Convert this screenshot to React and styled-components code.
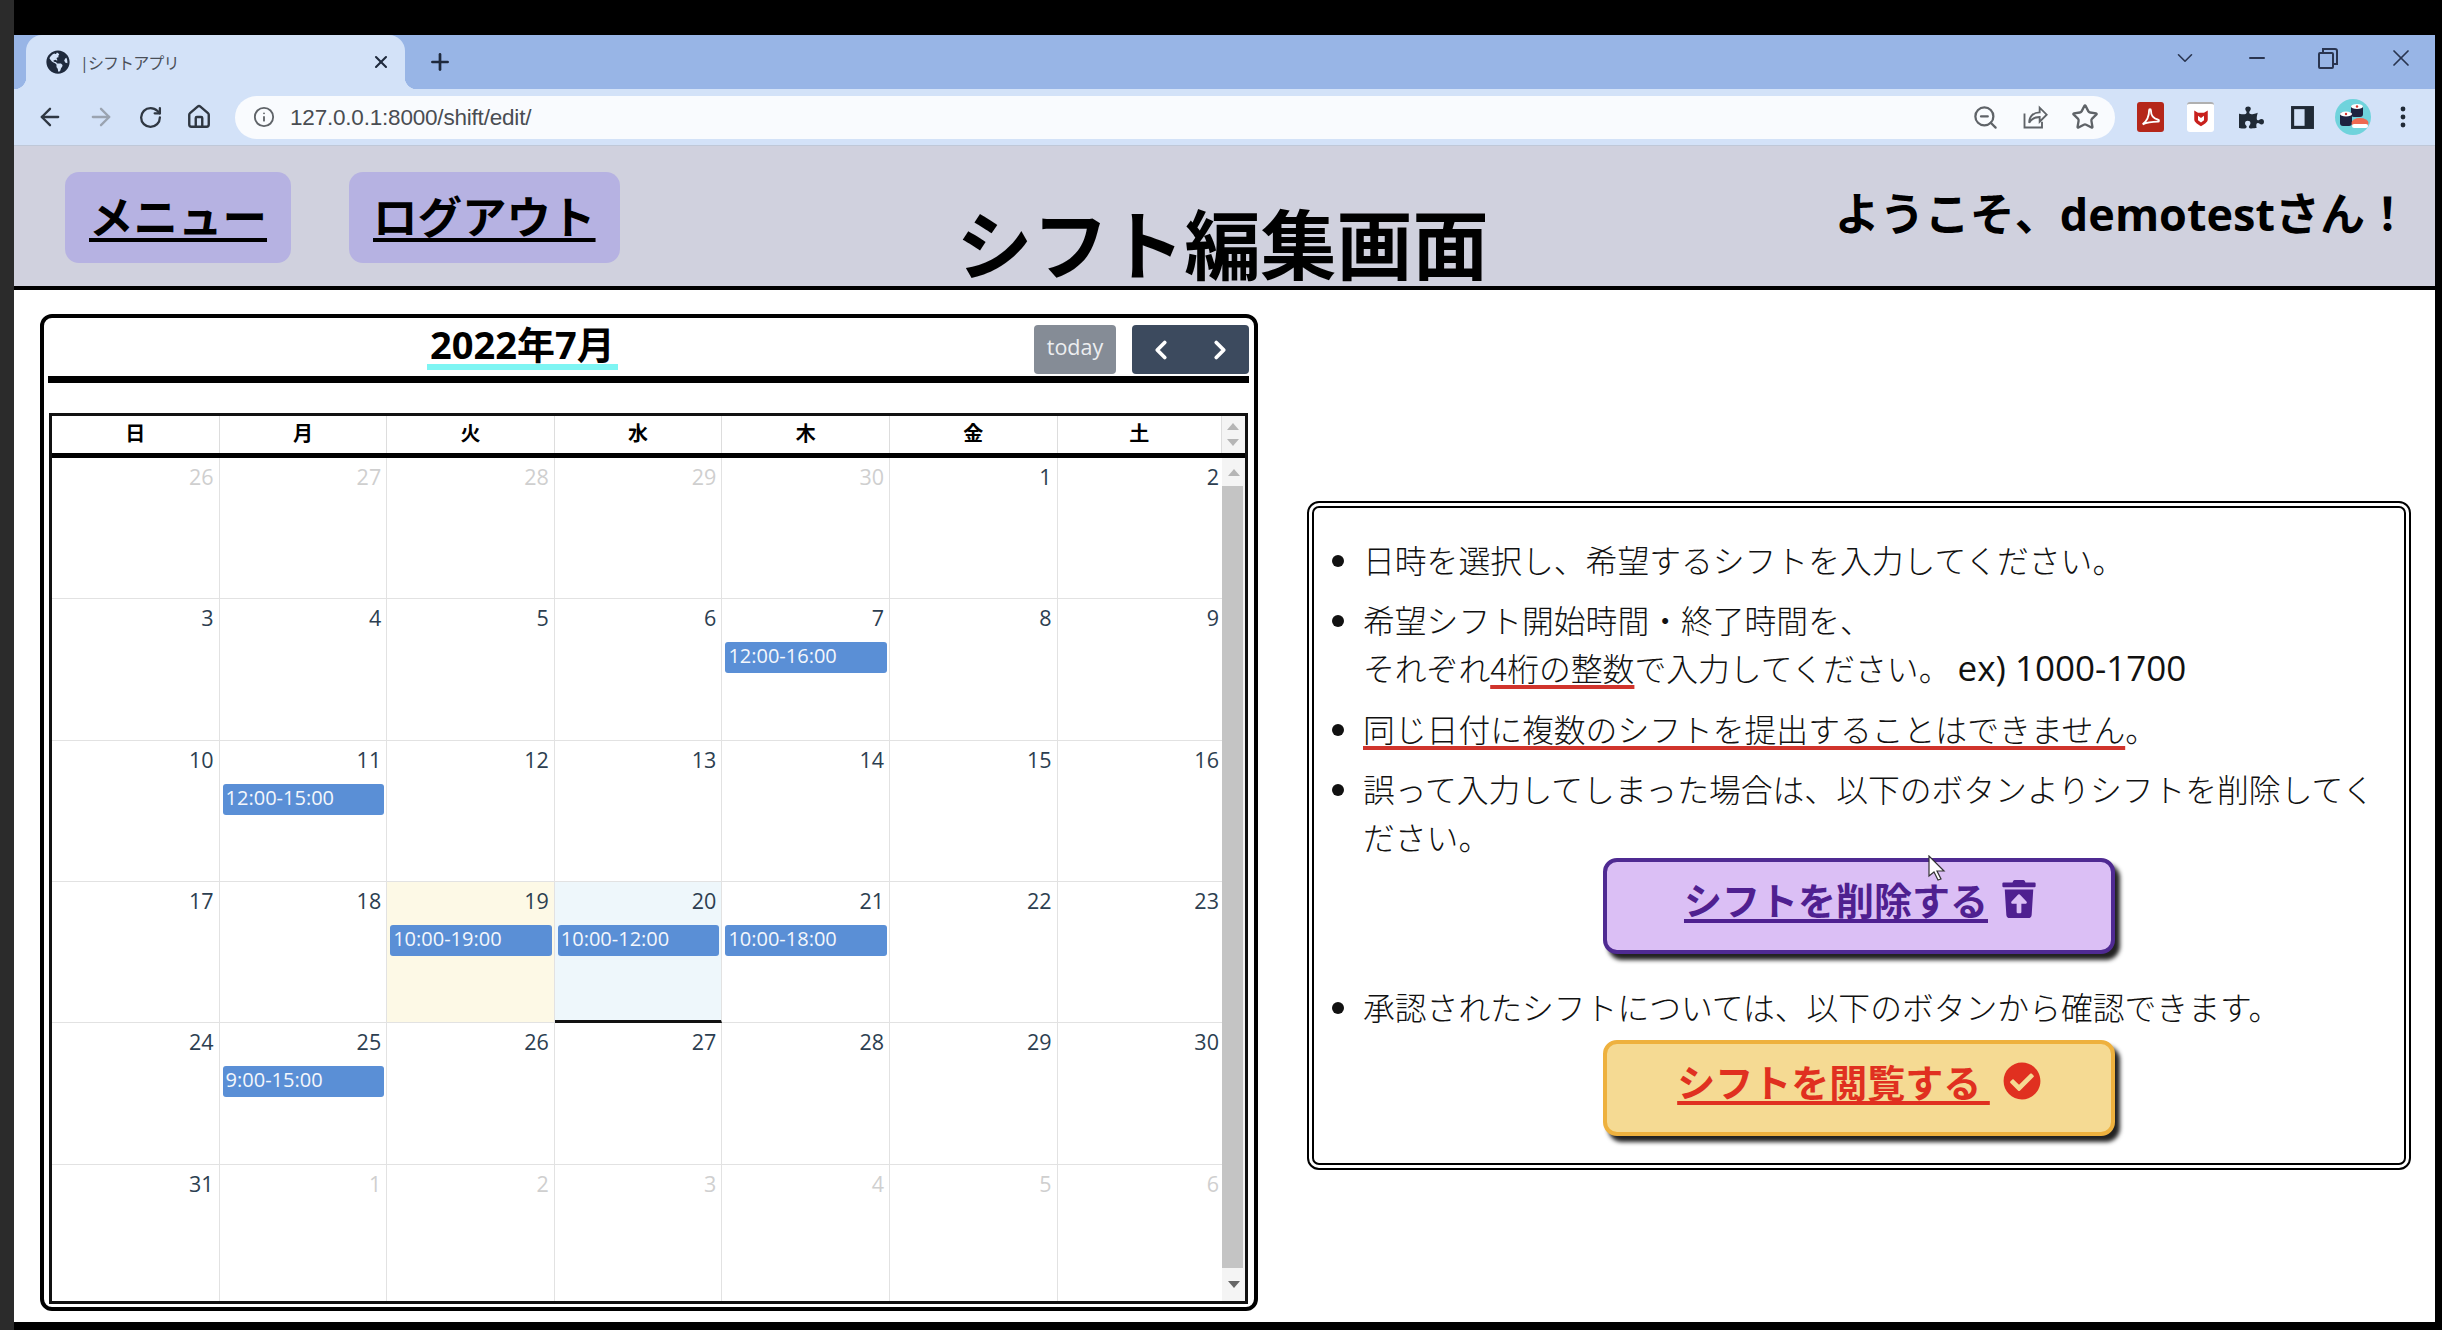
import React from 'react';
import styled, { createGlobalStyle } from 'styled-components';
import {
  ArrowLeft,
  ArrowRight,
  ChevronDown,
  ChevronLeft,
  ChevronRight,
  Home,
  Info,
  Minus,
  Plus,
  RotateCw,
  Star,
  X,
  ZoomOut,
} from 'lucide-react';
import {
  FaCheckCircle,
  FaGlobeAmericas,
  FaPuzzlePiece,
  FaTrashRestore,
} from 'react-icons/fa';

const GlobalStyle = createGlobalStyle`
  html, body {
    margin: 0;
    padding: 0;
    background: #000;
  }
  * {
    box-sizing: border-box;
  }
`;

const SANS = `"Open Sans", "Noto Sans CJK JP", sans-serif`;

const Screen = styled.div`
  position: relative;
  width: 2442px;
  height: 1330px;
  padding: 35px 7px 8px 0;
  background: #000;
  border-left: 14px solid #2b2b2b;
  overflow: hidden;
  font-family: ${SANS};
`;

const Window = styled.div`
  display: flex;
  flex-direction: column;
  height: 100%;
  background: #fff;
`;

const TabStrip = styled.div`
  display: flex;
  align-items: stretch;
  height: 54px;
  padding: 0 20px 0 12px;
  background: #98b5e6;
  color: #1f2a3d;
`;

const Tab = styled.div`
  position: relative;
  display: flex;
  align-items: center;
  width: 379px;
  padding: 0 14px 0 20px;
  background: #d3e2f8;
  border-radius: 16px 16px 0 0;

  &::before,
  &::after {
    content: '';
    position: absolute;
    bottom: 0;
    width: 12px;
    height: 12px;
  }
  &::before {
    left: -12px;
    background: radial-gradient(circle at 0 0, transparent 12px, #d3e2f8 12.5px);
  }
  &::after {
    right: -12px;
    background: radial-gradient(circle at 100% 0, transparent 12px, #d3e2f8 12.5px);
  }
`;

const TabTitle = styled.span`
  flex: 1;
  margin-left: 10px;
  font-size: 16px;
  letter-spacing: -0.9px;
  color: #4a4f58;
`;

const NewTab = styled.div`
  display: flex;
  align-items: center;
  margin-left: 22px;
`;

const WindowControls = styled.div`
  display: flex;
  align-items: center;
  gap: 47px;
  margin-left: auto;
  padding-bottom: 8px;
  color: #2a3550;
`;

const RestoreIcon = styled.svg`
  width: 24px;
  height: 24px;
  fill: none;
  stroke: currentColor;
  stroke-width: 2;
`;

const Toolbar = styled.div`
  display: flex;
  align-items: center;
  height: 57px;
  padding: 0 0 0 22px;
  background: #d3e2f8;
  border-bottom: 1px solid #bfc8d8;
  color: #2f3742;
`;

const NavIcons = styled.div`
  display: flex;
  align-items: center;
  gap: 23px;
  width: 199px;
`;

const Omnibox = styled.div`
  display: flex;
  align-items: center;
  width: 1880px;
  height: 43px;
  padding: 0 16px 0 18px;
  background: #f9fbfe;
  border-radius: 22px;
`;

const Url = styled.span`
  margin-left: 15px;
  padding-top: 1px;
  font-family: "Liberation Sans", sans-serif;
  font-size: 22.5px;
  letter-spacing: -0.2px;
  color: #4a4d52;
`;

const OmniActions = styled.div`
  display: flex;
  align-items: center;
  gap: 22px;
  margin-left: auto;
  color: #5f6368;
`;

const Extensions = styled.div`
  display: grid;
  grid-auto-flow: column;
  grid-auto-columns: 50.6px;
  justify-items: center;
  align-items: center;
  padding-left: 10px;
`;

const ExtensionBox = styled.div`
  display: flex;
  align-items: center;
  justify-content: center;
  width: 27px;
  height: 30px;
  border-radius: 3px;
  background: ${(p) => p.$bg || 'transparent'};
  border-top: ${(p) => (p.$cap ? '2px solid #b0b0b0' : '0')};
`;

const ExtensionSvg = styled.svg`
  width: ${(p) => p.$size || 22}px;
  height: ${(p) => p.$size || 22}px;
`;

const Header = styled.header`
  display: flex;
  height: 144px;
  padding-left: 51px;
  padding-right: 25px;
  background: #d0d1de;
  border-bottom: 4px solid #000;
`;

const HeaderNav = styled.nav`
  display: flex;
  align-items: flex-start;
  gap: 58px;
  padding-top: 26px;
`;

const HeaderLink = styled.a`
  display: flex;
  align-items: center;
  height: 91px;
  padding: 0 24px 6px;
  background: #b6b2e2;
  border-radius: 14px;
  color: #000;
  font-size: 44.5px;
  font-weight: 700;
  text-decoration: underline;
  text-decoration-thickness: 4px;
  text-underline-offset: 4px;
`;

const PageTitle = styled.h1`
  align-self: flex-end;
  margin: 0 0 3px 337px;
  font-size: 76px;
  line-height: 1;
  font-weight: 700;
  color: #000;
`;

const Greeting = styled.div`
  align-self: flex-start;
  margin: 38px 0 0 auto;
  font-size: 45px;
  line-height: 60px;
  font-weight: 700;
  color: #000;
`;

const Main = styled.main`
  display: flex;
  align-items: flex-start;
  flex: 1;
  gap: 49px;
  padding: 24px 0 0 26px;
  background: #fff;
`;

const CalendarFrame = styled.section`
  width: 1218px;
  height: 997px;
  padding: 7px 5px 4px 4px;
  border: 4px solid #000;
  border-radius: 12px;
`;

const CalToolbar = styled.div`
  display: flex;
  align-items: flex-start;
  height: 58px;
  padding-right: 0;
  border-bottom: 7px solid #000;
`;

const CalTitle = styled.h2`
  margin: 0 0 0 379px;
  height: 45px;
  padding: 0 3px;
  font-size: 38px;
  line-height: 39px;
  font-weight: 700;
  color: #000;
  border-bottom: 6px solid #7ef5f3;
`;

const TodayButton = styled.div`
  display: flex;
  align-items: center;
  justify-content: center;
  width: 82px;
  height: 49px;
  margin-left: auto;
  padding-bottom: 7px;
  background: #858c96;
  border-radius: 4px;
  color: #eceef0;
  font-size: 21.5px;
`;

const NavGroup = styled.div`
  display: flex;
  align-items: center;
  justify-content: space-around;
  width: 117px;
  height: 49px;
  margin-left: 16px;
  background: #3c4a5e;
  border-radius: 4px;
  color: #fff;
`;

const Table = styled.div`
  margin: 30px 1px 0 1px;
  border: 3px solid #111;
`;

const COLUMNS = 'repeat(6, 167.6px) 164.4px';

const HeadRow = styled.div`
  display: grid;
  grid-template-columns: ${COLUMNS} 23px;
  height: 42px;
  border-bottom: 5px solid #000;
`;

const HeadCell = styled.div`
  display: flex;
  align-items: center;
  justify-content: center;
  padding-bottom: 5px;
  border-right: 1px solid #ddd;
  font-size: 20px;
  font-weight: 700;
  color: #000;
`;

const HeadGutter = styled.div`
  display: flex;
  flex-direction: column;
  align-items: center;
  justify-content: center;
  gap: 9px;
  background: #f4f4f4;
`;

const Arrow = styled.div`
  width: 0;
  height: 0;
  border-left: 6px solid transparent;
  border-right: 6px solid transparent;
  border-${(p) => (p.$down ? 'top' : 'bottom')}: 7px solid ${(p) => p.$color || '#b5b5b5'};
`;

const Body = styled.div`
  display: flex;
  height: 843px;
`;

const DayGrid = styled.div`
  display: grid;
  grid-template-columns: ${COLUMNS};
  grid-auto-rows: 141.33px;
  width: 1170px;
  overflow: hidden;
`;

const DayNumber = styled.div`
  padding: 4px 5px 0 0;
  height: 35px;
  text-align: right;
  font-size: 21.5px;
  line-height: 30px;
  color: ${(p) => (p.$muted ? '#cfcfcf' : '#2c3e50')};
`;

const Day = styled.div`
  border-right: 1px solid #e2e2e2;
  border-bottom: ${(p) => (p.$selected ? '3px solid #111' : '1px solid #e2e2e2')};
  background: ${(p) => (p.$today ? '#fdf9e6' : p.$selected ? '#eef7fb' : '#fff')};

  &:nth-child(7n) {
    border-right: 0;
  }
  &:nth-child(7n) ${DayNumber} {
    padding-right: 3px;
  }
`;

const Event = styled.div`
  height: 31px;
  margin: 8px 2px 0 3px;
  padding-left: 3px;
  background: #5a8fd6;
  border-radius: 3px;
  color: #f4f7fc;
  font-size: 20px;
  line-height: 28px;
`;

const Scrollbar = styled.div`
  display: flex;
  flex-direction: column;
  align-items: stretch;
  width: 23px;
  background: #f4f4f4;
`;

const ScrollEnd = styled.div`
  display: flex;
  align-items: center;
  justify-content: center;
  height: ${(p) => p.$h}px;
`;

const ScrollThumb = styled.div`
  flex: 1;
  margin-right: 2px;
  background: #c4c4c4;
`;

const InfoPanel = styled.section`
  width: 1104px;
  height: 669px;
  margin-top: 187px;
  padding: 27px 10px 0 49px;
  border: 7px double #000;
  border-radius: 12px;
`;

const Notes = styled.ul`
  margin: 0;
  padding: 0;
  font-family: "Noto Sans CJK JP", sans-serif;
  font-size: 31.8px;
  font-weight: 300;
  line-height: 48px;
  color: #111;
`;

const Note = styled.li`
  margin-bottom: 12px;
`;

const Latin = styled.span`
  font-family: "Open Sans", sans-serif;
  font-size: 35px;
  font-weight: 400;
  color: #111;
`;

const Marked = styled.span`
  text-decoration: underline;
  text-decoration-color: #d0342c;
  text-decoration-thickness: 4px;
  text-decoration-skip-ink: none;
  text-underline-offset: 4px;
`;

const ActionButton = styled.a`
  display: flex;
  align-items: center;
  justify-content: center;
  gap: ${(p) => p.$gap}px;
  width: 512px;
  height: 96px;
  margin: ${(p) => p.$margin};
  padding-bottom: 14px;
  padding-left: ${(p) => p.$shift || 0}px;
  background: ${(p) => p.$bg};
  border: 4px solid ${(p) => p.$border};
  border-radius: 14px;
  box-shadow: 5px 6px 4px #222;
  color: ${(p) => p.$color};
  font-size: 38px;
  font-weight: 700;
  line-height: 1.2;
`;

const ActionLabel = styled.span`
  text-decoration: underline;
  text-decoration-thickness: 4px;
  text-decoration-skip-ink: none;
  text-underline-offset: 4px;
  white-space: pre;
`;

const Cursor = styled.svg`
  position: absolute;
  left: 1914px;
  top: 855px;
  width: 20px;
  height: 26px;
`;

const WEEKDAYS = ['日', '月', '火', '水', '木', '金', '土'];

// June 26 - August 6, 2022
const DAYS = [
  ...[26, 27, 28, 29, 30].map((n) => ({ n, muted: true })),
  ...Array.from({ length: 31 }, (_, i) => ({ n: i + 1 })),
  ...[1, 2, 3, 4, 5, 6].map((n) => ({ n, muted: true })),
];

const EVENTS = {
  7: '12:00-16:00',
  11: '12:00-15:00',
  19: '10:00-19:00',
  20: '10:00-12:00',
  21: '10:00-18:00',
  25: '9:00-15:00',
};

const BrowserChrome = () => (
  <>
    <TabStrip>
      <Tab>
        <FaGlobeAmericas size={24} color="#1f2a3d" />
        <TabTitle>|シフトアプリ</TabTitle>
        <X size={20} strokeWidth={2.5} />
      </Tab>
      <NewTab>
        <Plus size={26} strokeWidth={2.5} />
      </NewTab>
      <WindowControls>
        <ChevronDown size={26} strokeWidth={1.5} />
        <Minus size={24} strokeWidth={2} />
        <RestoreIcon viewBox="0 0 24 24">
          <rect x="3" y="7" width="14" height="15" rx="1" />
          <path d="M7 7V3h12a2 2 0 0 1 2 2v13h-4" />
        </RestoreIcon>
        <X size={28} strokeWidth={1.5} />
      </WindowControls>
    </TabStrip>
    <Toolbar>
      <NavIcons>
        <ArrowLeft size={28} strokeWidth={2} />
        <ArrowRight size={28} strokeWidth={2} color="#9aa3b0" />
        <RotateCw size={25} strokeWidth={2.2} />
        <Home size={26} strokeWidth={2.2} />
      </NavIcons>
      <Omnibox>
        <Info size={22} strokeWidth={2} color="#5f6368" />
        <Url>127.0.0.1:8000/shift/edit/</Url>
        <OmniActions>
          <ZoomOut size={27} strokeWidth={2} />
          <ExtensionSvg $size={28} viewBox="0 0 24 24" fill="none" stroke="currentColor" strokeWidth="1.6">
            <path d="M3 9v12h15v-5" />
            <path d="M7 17c0-6 4-9 9-9V4l6 6-6 6v-4c-4 0-7 1-9 5z" />
          </ExtensionSvg>
          <Star size={28} strokeWidth={2} />
        </OmniActions>
      </Omnibox>
      <Extensions>
        <ExtensionBox $bg="#b5271a">
          <ExtensionSvg viewBox="0 0 24 24" fill="none" stroke="#fff" strokeWidth="2">
            <path d="M4 20c4-3 7-9 7-15 0-2 2-2 2 0 0 5 3 9 8 10 1 0 1 2 0 2-6 0-11 0-17 3z" />
          </ExtensionSvg>
        </ExtensionBox>
        <ExtensionBox $bg="#fff" $cap>
          <ExtensionSvg $size={18} viewBox="0 0 24 24">
            <path d="M3 2l5 3h8l5-3v12c0 4-5 6-9 9-4-3-9-5-9-9z" fill="#c8201c" />
            <path d="M8 9l4 3 4-3v6l-4 3-4-3z" fill="#fff" />
          </ExtensionSvg>
        </ExtensionBox>
        <FaPuzzlePiece size={25} color="#202a36" />
        <ExtensionSvg $size={25} viewBox="0 0 24 24">
          <rect x="1" y="1" width="22" height="22" fill="#202a36" />
          <rect x="4" y="4" width="10" height="16" fill="#d3e2f8" />
        </ExtensionSvg>
        <ExtensionSvg $size={36} viewBox="0 0 36 36">
          <circle cx="18" cy="18" r="18" fill="#6fd3dc" />
          <rect x="16" y="6" width="12" height="12" rx="3" fill="#1d2340" />
          <ellipse cx="22" cy="7.5" rx="6" ry="2.5" fill="#fff" />
          <circle cx="22" cy="7.5" r="1.2" fill="#d8362f" />
          <rect x="5" y="13" width="12" height="14" rx="3" fill="#1d2340" />
          <ellipse cx="11" cy="15" rx="6" ry="2.5" fill="#fff" />
          <circle cx="11" cy="15" r="1.2" fill="#d8362f" />
          <ellipse cx="25" cy="24" rx="8.5" ry="5" fill="#ee6a52" />
          <rect x="17" y="25" width="16" height="4" rx="2" fill="#fff" />
        </ExtensionSvg>
        <ExtensionSvg $size={24} viewBox="0 0 24 24">
          <circle cx="12" cy="4" r="2.4" fill="#202a36" />
          <circle cx="12" cy="12" r="2.4" fill="#202a36" />
          <circle cx="12" cy="20" r="2.4" fill="#202a36" />
        </ExtensionSvg>
      </Extensions>
    </Toolbar>
  </>
);

const Calendar = () => (
  <CalendarFrame>
    <CalToolbar>
      <CalTitle>2022年7月</CalTitle>
      <TodayButton>today</TodayButton>
      <NavGroup>
        <ChevronLeft size={30} strokeWidth={3} />
        <ChevronRight size={30} strokeWidth={3} />
      </NavGroup>
    </CalToolbar>
    <Table>
      <HeadRow>
        {WEEKDAYS.map((d) => (
          <HeadCell key={d}>{d}</HeadCell>
        ))}
        <HeadGutter>
          <Arrow />
          <Arrow $down />
        </HeadGutter>
      </HeadRow>
      <Body>
        <DayGrid>
          {DAYS.map((d, i) => (
            <Day
              key={i}
              $today={!d.muted && d.n === 19}
              $selected={!d.muted && d.n === 20}
            >
              <DayNumber $muted={d.muted}>{d.n}</DayNumber>
              {!d.muted && EVENTS[d.n] && <Event>{EVENTS[d.n]}</Event>}
            </Day>
          ))}
        </DayGrid>
        <Scrollbar>
          <ScrollEnd $h={28}>
            <Arrow />
          </ScrollEnd>
          <ScrollThumb />
          <ScrollEnd $h={33}>
            <Arrow $down $color="#666" />
          </ScrollEnd>
        </Scrollbar>
      </Body>
    </Table>
  </CalendarFrame>
);

const Instructions = () => (
  <InfoPanel>
    <Notes>
      <Note>日時を選択し、希望するシフトを入力してください。</Note>
      <Note>
        希望シフト開始時間・終了時間を、
        <br />
        それぞれ<Marked>4桁の整数</Marked>で入力してください。 <Latin>ex) 1000-1700</Latin>
      </Note>
      <Note>
        <Marked>同じ日付に複数のシフトを提出することはできません</Marked>。
      </Note>
      <Note>誤って入力してしまった場合は、以下のボタンよりシフトを削除してください。</Note>
      <ActionButton
        $bg="#dbbff5"
        $border="#4f2a92"
        $color="#4f2090"
        $gap={12}
        $shift={4}
        $margin="-14px 0 28px 240px"
      >
        <ActionLabel>シフトを削除する</ActionLabel>
        <FaTrashRestore size={38} />
      </ActionButton>
      <Note>承認されたシフトについては、以下のボタンから確認できます。</Note>
      <ActionButton
        $bg="#f5da93"
        $border="#eeb13e"
        $color="#e03020"
        $gap={13}
        $margin="-2px 0 0 240px"
      >
        <ActionLabel>シフトを閲覧する </ActionLabel>
        <FaCheckCircle size={38} />
      </ActionButton>
    </Notes>
  </InfoPanel>
);

const App = () => (
  <Screen>
    <GlobalStyle />
    <Window>
      <BrowserChrome />
      <Header>
        <HeaderNav>
          <HeaderLink>メニュー</HeaderLink>
          <HeaderLink>ログアウト</HeaderLink>
        </HeaderNav>
        <PageTitle>シフト編集画面</PageTitle>
        <Greeting>ようこそ、demotestさん！</Greeting>
      </Header>
      <Main>
        <Calendar />
        <Instructions />
      </Main>
    </Window>
    <Cursor viewBox="0 0 20 26">
      <path d="M1 1v20l5-4 4 8 3-1-4-8h7z" fill="#fff" stroke="#333" strokeWidth="1.2" />
    </Cursor>
  </Screen>
);

export default App;
